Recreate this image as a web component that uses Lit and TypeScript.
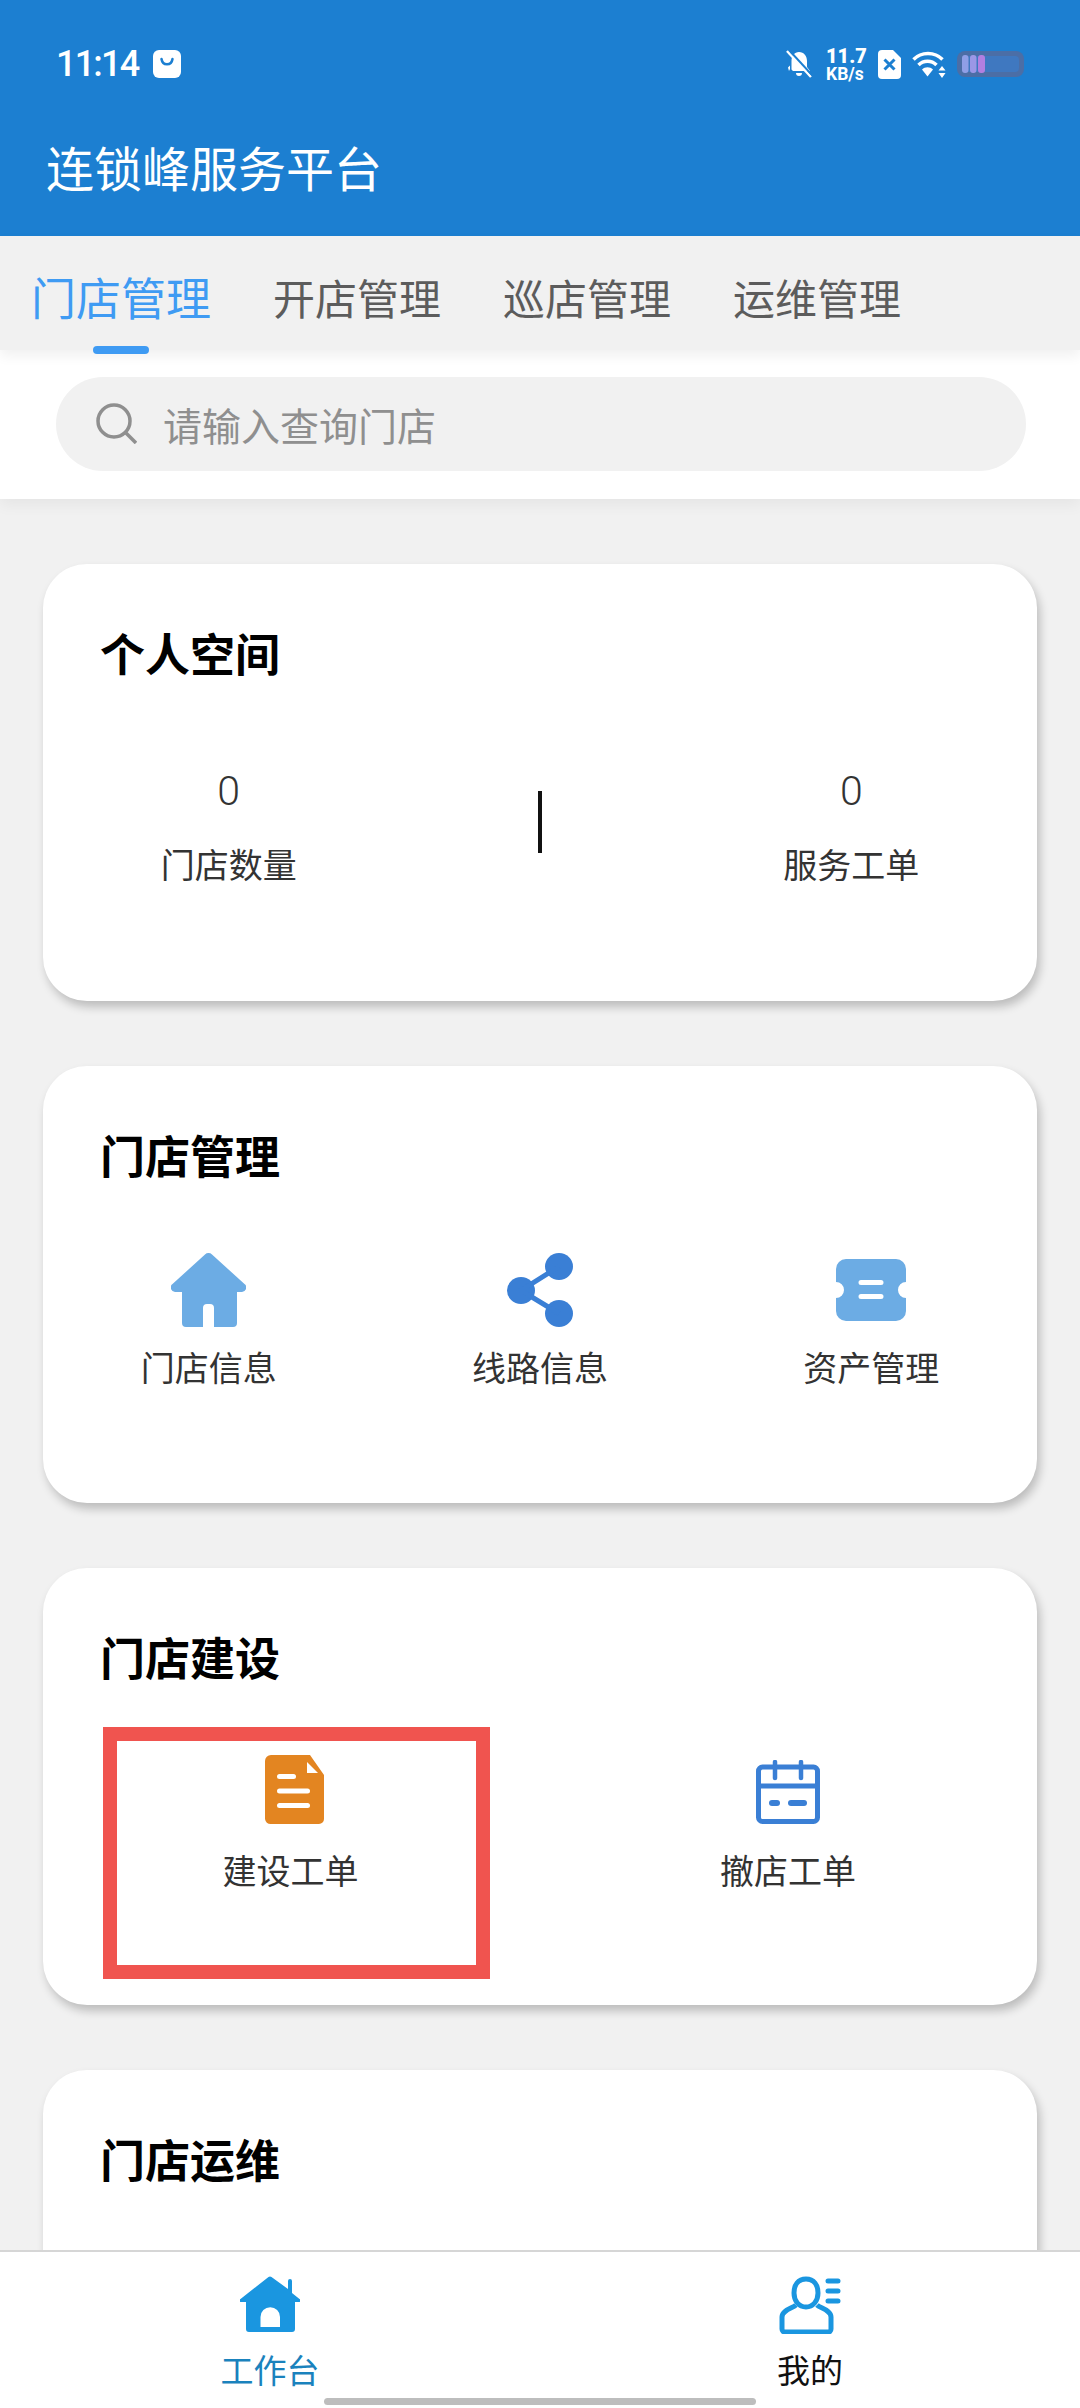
import { LitElement, html, css } from "lit";
import { customElement } from "lit/decorators.js";

const homeIcon = html`<svg class="ic" style="width:75px;height:74px" viewBox="0 0 75 74"><path fill="#6cace4" d="M34 1.500a5 5 0 0 1 7 0L73.500 31a4.500 4.500 0 0 1-3.500 8h-4V70a4 4 0 0 1-4 4H43V55a4 4 0 0 0-4-4h-3a4 4 0 0 0-4 4v19H15a4 4 0 0 1-4-4V39H5a4.500 4.500 0 0 1-3.500-8z"/></svg>`;
const shareIcon = html`<svg class="ic" style="width:66px;height:74px" viewBox="0 0 66 74"><g fill="#3a7fd5"><ellipse cx="52" cy="13.500" rx="14" ry="13.500"/><ellipse cx="14" cy="37.500" rx="14" ry="13.500"/><ellipse cx="52" cy="60.500" rx="14" ry="13.500"/></g><path stroke="#3a7fd5" stroke-width="5" fill="none" d="M52 13.500L14 37.500L52 60.500"/></svg>`;
const ticketIcon = html`<svg class="ic" style="width:70px;height:62px" viewBox="0 0 70 62"><path fill="#6cace4" fill-rule="evenodd" d="M10 0h50a10 10 0 0 1 10 10v13a8 8 0 0 0 0 16v13a10 10 0 0 1-10 10H10A10 10 0 0 1 0 52V39a8 8 0 0 0 0-16V10A10 10 0 0 1 10 0zM25 21a2.500 2.500 0 0 0 0 5h20a2.500 2.500 0 0 0 0-5zM25 35a2.500 2.500 0 0 0 0 5h20a2.500 2.500 0 0 0 0-5z"/></svg>`;
const docIcon = html`<svg class="ic" style="width:59px;height:69px" viewBox="0 0 59 69"><path fill="#e38521" d="M6 0h39l14 20v44a5 5 0 0 1-5 5H6a6 6 0 0 1-6-5V6a6 6 0 0 1 6-6z"/><path fill="#fff" d="M42 7l11 11H42z"/><g fill="#fff"><rect x="12" y="19" width="19" height="5" rx="2.500"/><rect x="12" y="33.500" width="33" height="5" rx="2.500"/><rect x="12" y="48" width="33" height="5" rx="2.500"/></g></svg>`;
const calIcon = html`<svg class="ic" style="width:64px;height:64px" viewBox="0 0 64 64"><rect x="2.500" y="7" width="59" height="54.500" rx="4" fill="none" stroke="#3a7fd5" stroke-width="5"/><path stroke="#3a7fd5" stroke-width="5" d="M2 26h60"/><path stroke="#3a7fd5" stroke-width="4.500" stroke-linecap="round" d="M19 2v16M45 2v16"/><rect x="13" y="40" width="11" height="6" rx="3" fill="#3a7fd5"/><rect x="32" y="40" width="19" height="6" rx="3" fill="#3a7fd5"/></svg>`;

const bag = html`<svg width="28" height="28" viewBox="0 0 28 28"><rect width="28" height="28" rx="6" fill="#fff"/><path d="M8.500 9c1 7 10 7 11 0" fill="none" stroke="#1c7fd1" stroke-width="2.500" stroke-linecap="round"/></svg>`;
const bell = html`<svg width="26" height="28" viewBox="0 0 26 28"><path fill="#fff" d="M13 2c5 0 8 4 8 9v6l3 4H7L5.500 19.500V11c0-5 3-9 7.500-9zM10 23h6a3 3 0 0 1-6 0z"/><path fill="#fff" d="M2 17.500l2-2V19l-1 2z"/><path stroke="#fff" stroke-width="2.500" d="M1 1l24 26"/><path stroke="#1c7fd1" stroke-width="2" d="M3 0l24 26"/></svg>`;
const sim = html`<svg width="23" height="29" viewBox="0 0 23 29"><path fill="#fff" d="M4 0h11l8 8v17a4 4 0 0 1-4 4H4a4 4 0 0 1-4-4V4a4 4 0 0 1 4-4z"/><path stroke="#1c7fd1" stroke-width="3" d="M6.500 9.500l10 10M16.500 9.500l-10 10"/></svg>`;
const wifi = html`<svg width="34" height="27" viewBox="0 0 34 27"><g fill="none" stroke="#fff" stroke-width="3.500"><path d="M1.500 8.500c8-8 21-8 29 0"/><path d="M6.500 14c5-5 13-5 18 0"/></g><path fill="#fff" d="M10 18.500c3-3 8-3 11 0l-5.500 7z"/><path fill="#fff" d="M30 15l3.500 4.500h-7zM30 27l3.500-5h-7z"/></svg>`;
const batt = html`<svg width="67" height="26" viewBox="0 0 67 26"><rect width="67" height="26" rx="8" fill="#4b6ea6"/><rect x="5" y="5" width="57" height="16" rx="4" fill="#3f78c0"/><rect x="5" y="4" width="6.500" height="18" rx="3" fill="#8f9fe6"/><rect x="13" y="4" width="6.500" height="18" rx="3" fill="#9b97e6"/><rect x="21" y="4" width="7" height="18" rx="3" fill="#b27fe0"/></svg>`;

@customElement("app-root")
export class AppRoot extends LitElement {
  static styles = css`
    :host { display: flex; flex-direction: column; width: 1080px; height: 2408px; overflow: hidden; background: #f1f1f1; position: relative;
      font-family: "Noto Sans CJK SC", "Noto Sans", sans-serif; color: #333; }
    .top { background: #1c7fd1; height: 236px; flex: none; color: #fff; box-sizing: border-box; padding: 43px 56px 0 46px; }
    .status { display: flex; align-items: center; height: 42px; }
    .time { font: 500 36px/42px Roboto, sans-serif; margin: 0 15px 0 10px; letter-spacing: -1.800px; }
    .spacer { flex: 1; }
    .status .r { display: flex; align-items: center; }
    .speed { font: 700 17.500px/16px Roboto, sans-serif; text-align: center; margin: 0 15px 0 14px; width: 37px; white-space: nowrap; }
    .speed b { display: block; font-size: 20px; line-height: 20px; }
    .gap { width: 11px; }
    .title { font-size: 48px; line-height: 60px; margin-top: 51px; white-space: nowrap; }
    .tabs { height: 114px; flex: none; background: #f1f1f1; display: flex; align-items: flex-start; position: relative; z-index: 2; padding-left: 31px; box-shadow: 0 6px 12px rgba(0,0,0,.06); }
    .tab { font-size: 42px; line-height: 60px; color: #5c5c5c; margin-top: 31px; margin-right: 62px; white-space: nowrap; }
    .tab.on { font-size: 45px; color: #3f9bf3; position: relative; }
    .tab.on::after { content: ""; position: absolute; left: 62px; top: 79px; width: 56px; height: 8px; border-radius: 4px; background: #3f9bf3; }
    .search { height: 149px; flex: none; background: #fff; box-sizing: border-box; padding: 27px 54px 28px 56px; box-shadow: 0 6px 14px rgba(0,0,0,.05); position: relative; z-index: 1; }
    .pill { height: 94px; background: #f1f1f1; border-radius: 47px; display: flex; align-items: center; padding-left: 40px; gap: 26px; font-size: 39px; color: #8f8f8f; }
    .pill svg { margin-top: -2px; }
    .body { flex: 1; min-height: 0; overflow: hidden; padding: 65px 43px 0; display: flex; flex-direction: column; gap: 65px; }
    .card { flex: none; height: 437px; box-sizing: border-box; background: #fff; border-radius: 44px; padding-top: 59px; box-shadow: 3px 6px 10px rgba(0,0,0,.22); }
    .card h2 { margin: 0 0 0 57px; font-size: 45px; line-height: 60px; font-weight: 700; color: #000; }
    .stats { display: grid; grid-template-columns: repeat(3, 1fr); padding: 0 30px; margin-top: 83px; justify-items: center; }
    .stat { text-align: center; font-size: 34px; line-height: 50px; color: #333; white-space: nowrap; }
    .stat .n { margin-bottom: 23px; font: 300 41px/50px Roboto, sans-serif; }
    .div { width: 4px; height: 62px; background: #111; margin-top: 25px; }
    .grid3, .grid2 { display: grid; text-align: center; font-size: 34px; color: #333; }
    .grid3 { grid-template-columns: repeat(3, 1fr); margin-top: 68px; }
    .grid2 { grid-template-columns: repeat(2, 1fr); padding: 0 2px 0 4px; margin-top: 68px; }
    .item { display: flex; flex-direction: column; align-items: center; height: 150px; }
    .icbox { height: 74px; display: flex; align-items: center; justify-content: center; }
    .grid2 .icbox { height: 69px; align-items: flex-end; }
    .lab { line-height: 50px; margin-top: 15px; white-space: nowrap; }
    .grid2 .lab { margin-top: 21px; }
    .grid2 .lab.shift { margin-right: 7px; }
    .mark { position: absolute; left: 103px; top: 1727px; width: 387px; height: 252px; box-sizing: border-box; border: 14px solid #f0544f; z-index: 3; pointer-events: none; }
    .nav { flex: none; height: 158px; background: #fff; border-top: 2px solid #d6d6d6; box-sizing: border-box; display: grid; grid-template-columns: 1fr 1fr; position: relative; z-index: 2; text-align: center; font-size: 33px; }
    .nav div { display: flex; flex-direction: column; align-items: center; padding-top: 24px; }
    .nav .a { color: #1a82bd; }
    .nav .b { color: #111; }
    .nav svg { height: 58px; }
    .nav span { line-height: 44px; margin-top: 13px; }
    .indicator { position: absolute; left: 324px; width: 432px; bottom: 3px; height: 7px; border-radius: 4px; background: #bdbdbd; z-index: 3; }
  `;

  render() {
    return html`
      <div class="top">
        <div class="status">
          <span class="time">11:14</span>${bag}
          <span class="spacer"></span>
          <span class="r">${bell}<span class="speed"><b>11.7</b>KB/s</span>${sim}<span class="gap"></span>${wifi}<span class="gap"></span>${batt}</span>
        </div>
        <div class="title">连锁峰服务平台</div>
      </div>
      <div class="tabs">
        <span class="tab on">门店管理</span><span class="tab">开店管理</span><span class="tab">巡店管理</span><span class="tab">运维管理</span>
      </div>
      <div class="search">
        <div class="pill">
          <svg width="41" height="41" viewBox="0 0 41 41" fill="none" stroke="#8f8f8f" stroke-width="3.500"><circle cx="18" cy="18" r="16"/><path d="M29.500 29.500L40 40"/></svg>
          <span>请输入查询门店</span>
        </div>
      </div>
      <div class="body">
        <section class="card">
          <h2>个人空间</h2>
          <div class="stats">
            <div class="stat"><div class="n">0</div><div>门店数量</div></div>
            <div class="div"></div>
            <div class="stat"><div class="n">0</div><div>服务工单</div></div>
          </div>
        </section>
        <section class="card">
          <h2>门店管理</h2>
          <div class="grid3">
            <div class="item"><div class="icbox">${homeIcon}</div><div class="lab">门店信息</div></div>
            <div class="item"><div class="icbox">${shareIcon}</div><div class="lab">线路信息</div></div>
            <div class="item"><div class="icbox">${ticketIcon}</div><div class="lab">资产管理</div></div>
          </div>
        </section>
        <section class="card">
          <h2>门店建设</h2>
          <div class="grid2">
            <div class="item"><div class="icbox">${docIcon}</div><div class="lab shift">建设工单</div></div>
            <div class="item"><div class="icbox">${calIcon}</div><div class="lab">撤店工单</div></div>
          </div>
        </section>
        <section class="card"><h2>门店运维</h2></section>
      </div>
      <div class="mark"></div>
      <div class="nav">
        <div class="a">
          <svg width="60" height="58" viewBox="0 0 60 58"><path fill="#1a96e0" d="M28.500 1a2.500 2.500 0 0 1 3 0L48 13V5a2 2 0 0 1 4 0v12l7.500 6a1.500 1.500 0 0 1-1 3H55v27a3 3 0 0 1-3 3H9a3 3 0 0 1-3-3V26H1.500a1.500 1.500 0 0 1-1-3z"/><path fill="#fff" d="M20.500 51V41a9.750 9.750 0 0 1 19.500 0v10z"/></svg>
          <span>工作台</span>
        </div>
        <div class="b">
          <svg width="62" height="58" viewBox="0 0 62 58" fill="none" stroke="#1a96e0" stroke-width="5"><path d="M27 3c8 0 12 6 12 14 0 8-5 14-12 14s-12-6-12-14C15 9 19 3 27 3z"/><path d="M17 29c-3 3-14 5-14 12v12a3 3 0 0 0 3 3h43a3 3 0 0 0 3-3V41c0-7-11-9-14-12"/><path stroke-linecap="round" stroke-width="5" d="M49 5h10M49 15h10M49 25h10"/></svg>
          <span>我的</span>
        </div>
      </div>
      <div class="indicator"></div>
    `;
  }
}
